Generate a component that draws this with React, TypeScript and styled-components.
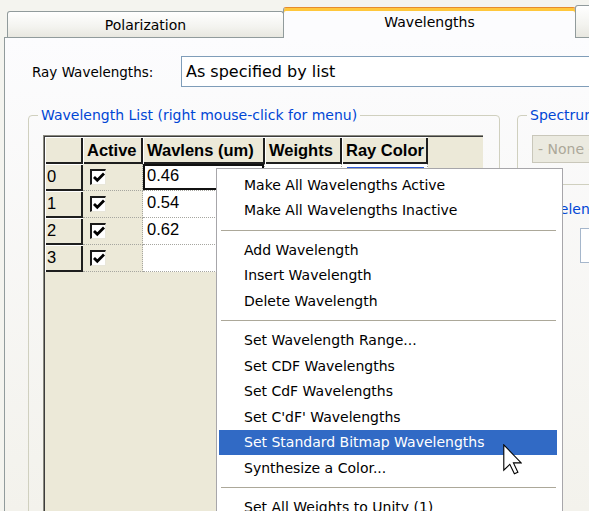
import React from "react";
import styled, { createGlobalStyle } from "styled-components";

const GlobalStyle = createGlobalStyle`
  html, body { margin: 0; padding: 0; background: #ffffff; }
  * { box-sizing: border-box; }
`;

const UI = `"DejaVu Sans", Tahoma, Verdana, sans-serif`;
const GRID = `"Liberation Sans", Arial, sans-serif`;

const Screen = styled.div`
  position: relative;
  width: 589px;
  height: 511px;
  overflow: hidden;
  background: #f4f4ef;
  font-family: ${UI};
  color: #000;
`;

const TabStrip = styled.div`
  display: flex;
  align-items: flex-end;
  width: 900px;
  height: 37px;
  padding-left: 7px;
`;

const Tab = styled.div<{ $active?: boolean; $w: number; $h: number; $overlap?: boolean }>`
  position: relative;
  z-index: ${(p) => (p.$active ? 2 : 1)};
  flex: none;
  width: ${(p) => p.$w}px;
  height: ${(p) => p.$h}px;
  margin-left: ${(p) => (p.$active || p.$overlap ? -1 : 0)}px;
  margin-bottom: ${(p) => (p.$active ? -1 : 0)}px;
  display: flex;
  align-items: center;
  justify-content: center;
  padding-bottom: ${(p) => (p.$active ? 2 : 0)}px;
  border: 1px solid #919b9c;
  border-bottom: none;
  border-radius: 3px 3px 0 0;
  background: ${(p) =>
    p.$active ? "#fcfcfe" : "linear-gradient(#ffffff, #f3f3ef 60%, #e8e7e0)"};
  ${(p) =>
    p.$active
      ? `border-top: 1px solid #e68b2c; box-shadow: inset 0 3px 0 #ffc73c;`
      : ""}
  font-size: 14px;
  line-height: 16px;
  white-space: nowrap;
`;

const Panel = styled.div`
  margin-left: 4px;
  width: 900px;
  height: 474px;
  border-top: 1px solid #919b9c;
  border-left: 1px solid #919b9c;
  background: linear-gradient(#fcfcfe, #f3f2ec);
  padding: 18px 0 0 23px;
`;

const RayRow = styled.div`
  display: flex;
  align-items: center;
  height: 31px;
`;

const RayLabel = styled.div`
  width: 153px;
  padding-left: 4px;
  font-size: 13.5px;
  white-space: nowrap;
`;

const RayInput = styled.div`
  width: 500px;
  height: 31px;
  border: 1px solid #7f9db9;
  background: #ffffff;
  padding-left: 4px;
  display: flex;
  align-items: center;
  font-size: 16px;
  white-space: nowrap;
`;

const Groups = styled.div`
  display: flex;
  align-items: flex-start;
  gap: 17px;
  margin-top: 20px;
`;

const Column = styled.div`
  display: flex;
  flex-direction: column;
  gap: 16px;
  width: 220px;
`;

const Group = styled.fieldset<{ $w: number; $h: number; $pt: number }>`
  flex: none;
  margin: 0;
  min-width: 0;
  width: ${(p) => p.$w}px;
  height: ${(p) => p.$h}px;
  border: 1px solid #d0d0bf;
  border-radius: 4px;
  padding: ${(p) => p.$pt}px 0 0 14px;
`;

const Legend = styled.legend`
  margin-left: -5px;
  padding: 0 3px;
  font-size: 14px;
  line-height: 16px;
  color: #0046d5;
  white-space: nowrap;
`;

const GridFrame = styled.div`
  width: 440px;
  height: 400px;
  background: #ece9d8;
  border-top: 1px solid #8a8a80;
  border-left: 1px solid #8a8a80;
  box-shadow: inset 1px 1px 0 #3c3c3c;
  padding: 1px 0 0 1px;
  font-family: ${GRID};
`;

const Table = styled.div`
  display: grid;
  grid-template-columns: 38px 60px 122px 77px 86px;
  grid-auto-rows: 27px;
  width: max-content;
`;

const HeadCell = styled.div<{ $bold?: boolean }>`
  display: flex;
  align-items: center;
  padding: 0 0 ${(p) => (p.$bold ? 1 : 3)}px ${(p) => (p.$bold ? 4 : 2)}px;
  background: #ece9d8;
  box-shadow: inset 1px 1px 0 #ffffff, inset -2px -2px 0 #1e1e1e;
  font-size: 16.5px;
  font-weight: ${(p) => (p.$bold ? 700 : 400)};
  white-space: nowrap;
`;

const BodyCell = styled.div<{ $beige?: boolean; $selected?: boolean }>`
  display: flex;
  align-items: center;
  padding: 0 0 3px 4px;
  background: ${(p) => (p.$beige ? "#ece9d8" : "#ffffff")};
  border-right: 1px dotted #a6a6a0;
  border-bottom: 1px dotted #a6a6a0;
  box-shadow: ${(p) => (p.$selected ? "inset 0 0 0 2px #111111" : "none")};
  font-size: 16.5px;
  white-space: nowrap;
`;

const ActiveCell = styled(BodyCell)`
  padding: 0 0 0 7px;
`;

const SwatchCell = styled(BodyCell)`
  padding: 3px 3px 3px 5px;
  align-items: stretch;
`;

const Swatch = styled.div<{ $c: string }>`
  flex: 1;
  background: ${(p) => p.$c};
`;

const CheckBox = styled.div`
  width: 16px;
  height: 16px;
  background: #ffffff;
  border-top: 2px solid #1a1a1a;
  border-left: 2px solid #1a1a1a;
  border-right: 1px solid #e8e6da;
  border-bottom: 1px solid #e8e6da;
  display: flex;
  align-items: center;
  justify-content: center;
`;

const GrayCombo = styled.div`
  width: 200px;
  height: 28px;
  border: 1px solid #c9c7ba;
  background: #ebeae0;
  color: #aca899;
  font-size: 14px;
  padding-left: 5px;
  display: flex;
  align-items: center;
  white-space: nowrap;
`;

const SmallBox = styled.div`
  margin-left: 48px;
  width: 80px;
  height: 35px;
  border: 1px solid #a5b6cb;
  background: #ffffff;
`;

const Menu = styled.div`
  position: absolute;
  left: 216px;
  top: 168px;
  width: 347px;
  height: 360px;
  background: #ffffff;
  border: 1px solid #a7a6aa;
  padding: 3px 5px 0 2px;
  z-index: 5;
`;

const MenuItem = styled.div<{ $hot?: boolean }>`
  height: 25.5px;
  display: flex;
  align-items: center;
  padding-left: 25px;
  font-size: 14px;
  white-space: nowrap;
  color: ${(p) => (p.$hot ? "#ffffff" : "#000000")};
  background: ${(p) => (p.$hot ? "#316ac5" : "transparent")};
`;

const MenuSeparator = styled.div`
  height: 14px;
  margin: 0 1px 0 2px;
  background: linear-gradient(#aca899, #aca899) center / 100% 1px no-repeat;
`;

const Pointer = styled.svg`
  position: absolute;
  left: 503px;
  top: 444px;
  z-index: 6;
`;

const Check = () => (
  <svg width="12" height="11" viewBox="0 0 12 11">
    <path d="M1 5 L4.3 8.3 L11 1.6" fill="none" stroke="#000" strokeWidth="2.8" />
  </svg>
);

const rows = [
  { n: "0", v: "0.46", c: "#2f5bd8" },
  { n: "1", v: "0.54", c: "#3fbf3f" },
  { n: "2", v: "0.62", c: "#e03a2a" },
  { n: "3", v: "", c: "" },
];

type Entry = { label: string; hot?: boolean } | "sep";

const menu: Entry[] = [
  { label: "Make All Wavelengths Active" },
  { label: "Make All Wavelengths Inactive" },
  "sep",
  { label: "Add Wavelength" },
  { label: "Insert Wavelength" },
  { label: "Delete Wavelength" },
  "sep",
  { label: "Set Wavelength Range..." },
  { label: "Set CDF Wavelengths" },
  { label: "Set CdF Wavelengths" },
  { label: "Set C'dF' Wavelengths" },
  { label: "Set Standard Bitmap Wavelengths", hot: true },
  { label: "Synthesize a Color..." },
  "sep",
  { label: "Set All Weights to Unity (1)" },
];

export default function App() {
  return (
    <Screen>
      <GlobalStyle />
      <TabStrip>
        <Tab $w={277} $h={26}>Polarization</Tab>
        <Tab $active $w={293} $h={31}>Wavelengths</Tab>
        <Tab $overlap $w={100} $h={32} />
      </TabStrip>
      <Panel>
        <RayRow>
          <RayLabel>Ray Wavelengths:</RayLabel>
          <RayInput>As specified by list</RayInput>
        </RayRow>
        <Groups>
          <Group $w={472} $h={420} $pt={12}>
            <Legend>Wavelength List (right mouse-click for menu)</Legend>
            <GridFrame>
              <Table>
                <HeadCell $bold />
                <HeadCell $bold>Active</HeadCell>
                <HeadCell $bold>Wavlens (um)</HeadCell>
                <HeadCell $bold>Weights</HeadCell>
                <HeadCell $bold>Ray Color</HeadCell>
                {rows.map((r, i) => (
                  <React.Fragment key={r.n}>
                    <HeadCell>{r.n}</HeadCell>
                    <ActiveCell $beige>
                      <CheckBox>
                        <Check />
                      </CheckBox>
                    </ActiveCell>
                    <BodyCell $selected={i === 0}>{r.v}</BodyCell>
                    <BodyCell />
                    <SwatchCell>{r.c ? <Swatch $c={r.c} /> : null}</SwatchCell>
                  </React.Fragment>
                ))}
              </Table>
            </GridFrame>
          </Group>
          <Column>
            <Group $w={220} $h={78} $pt={12}>
              <Legend>Spectrum</Legend>
              <GrayCombo>- None -</GrayCombo>
            </Group>
            <Group $w={220} $h={400} $pt={11}>
              <Legend>Wavelength Range</Legend>
              <SmallBox />
            </Group>
          </Column>
        </Groups>
      </Panel>
      <Menu>
        {menu.map((m, i) =>
          m === "sep" ? (
            <MenuSeparator key={i} />
          ) : (
            <MenuItem key={i} $hot={m.hot}>
              {m.label}
            </MenuItem>
          )
        )}
      </Menu>
      <Pointer width="19" height="31" viewBox="0 0 12 19.5">
        <path
          d="M0.5 0.5 L0.5 16.5 L4.3 12.8 L7.2 18.8 L9.4 17.8 L6.6 11.9 L11.5 11.9 Z"
          fill="#ffffff"
          stroke="#000000"
          strokeWidth="0.7"
          strokeLinejoin="miter"
        />
      </Pointer>
    </Screen>
  );
}
